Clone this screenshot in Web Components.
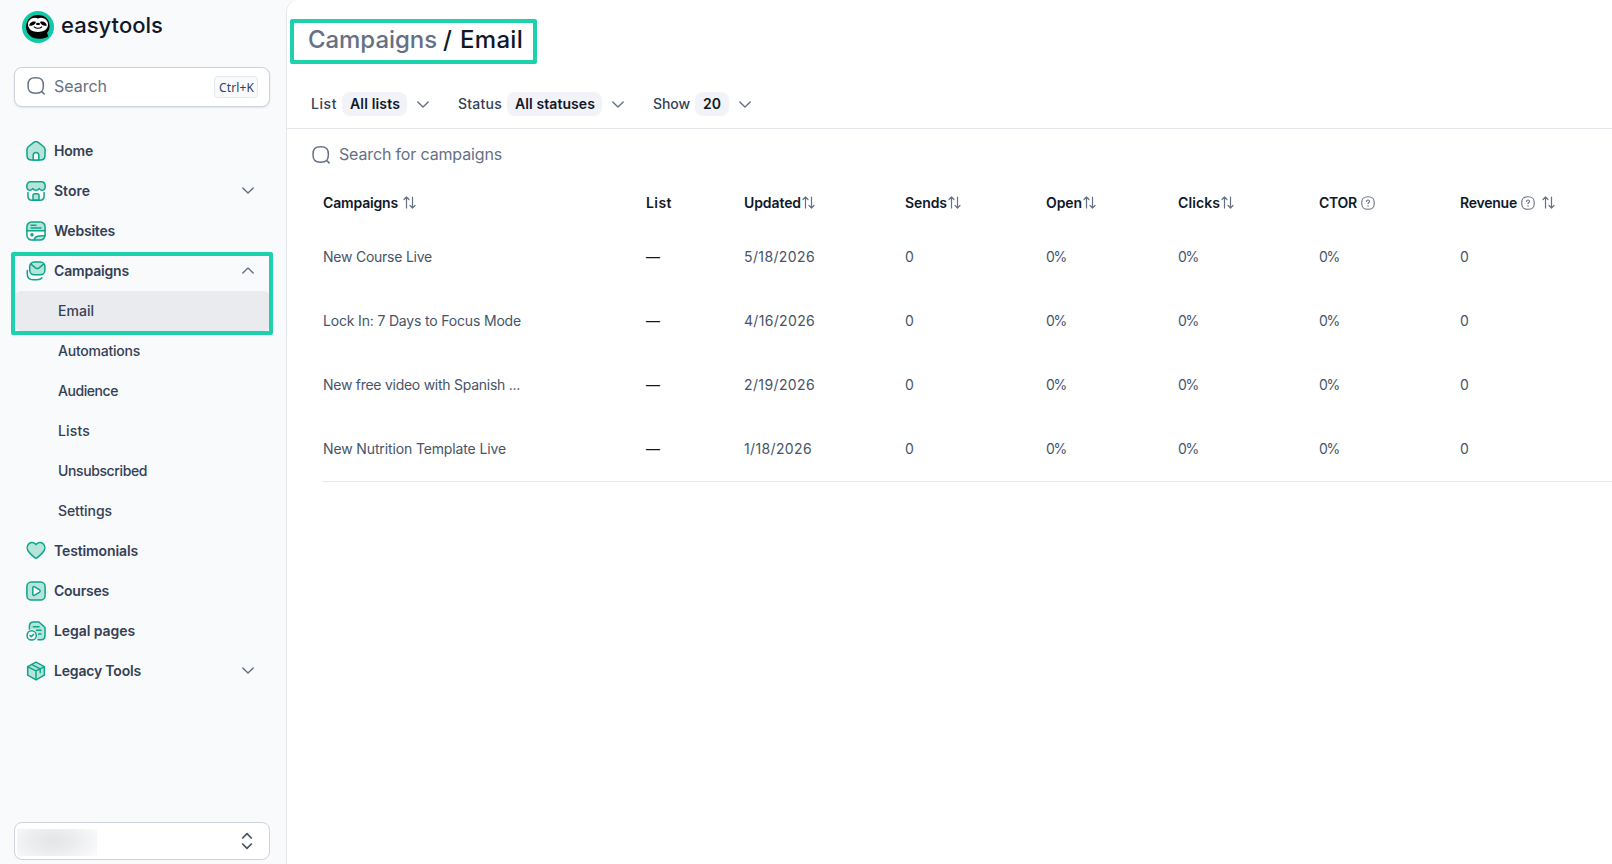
<!DOCTYPE html>
<html lang="en">
<head>
<meta charset="utf-8">
<title>Campaigns / Email</title>
<style>
  :root {
    --ink: #101828;
    --text: #344054;
    --muted: #667085;
    --line: #e4e7ec;
    --field-line: #cdd2dd;
    --side: #f9fafc;
    --accent: #1dd1ad;
    --green: #0ca48a;
    --mint: #b5e4da;
  }
  body {
    margin: 0;
    height: 864px;
    overflow: hidden;
    background: var(--side);
    color: var(--text);
    font: 400 14px/20px Inter, "Liberation Sans", sans-serif;
  }
</style>
</head>
<body>
<app-shell>
  <side-bar slot="side"></side-bar>
  <page-header></page-header>
  <filter-bar></filter-bar>
  <campaign-search></campaign-search>
  <campaign-table></campaign-table>
</app-shell>

<script>
const S = 'stroke="var(--green)" stroke-width="1.5" stroke-linecap="round" stroke-linejoin="round"';
const ICONS = {
  home: [20, 20, `<path ${S} fill="var(--mint)" d="M1 8.6C1 7.3 1.5 6.5 2.5 5.5L7.8 1.3C9.2.3 10.8.3 12.2 1.3L17.5 5.5C18.5 6.5 19 7.3 19 8.6V14.5C19 17.8 17.8 19 14.5 19H5.5C2.2 19 1 17.8 1 14.5Z"/><path ${S} fill="var(--side)" d="M7.2 19V14.2C7.2 12.5 8.2 11.4 10 11.4S12.8 12.5 12.8 14.2V19Z"/>`],
  store: [20, 20, `<path ${S} fill="none" d="M1.9 11.5V15C1.9 18 3 19.2 6 19.2H14C17 19.2 18.1 18 18.1 15V11.5"/><path ${S} fill="var(--mint)" d="M5 .8H15C17.8.8 19.2 2.3 19.2 5.3C19.2 8 18 9.2 16.4 9.2C15 9.2 14 8.6 13.2 7.6C12.5 8.8 11.4 9.2 10 9.2S7.5 8.8 6.8 7.6C6 8.6 5 9.2 3.6 9.2C2 9.2.8 8 .8 5.3C.8 2.3 2.2.8 5 .8Z"/><path ${S} fill="var(--mint)" d="M7 19V14.5C7 13.4 7.7 12.7 8.8 12.7H11.2C12.3 12.7 13 13.4 13 14.5V19Z"/>`],
  websites: [20, 20, `<path fill="var(--mint)" d="M1 10V6C1 2.5 2.5 1 6 1H14C17.5 1 19 2.5 19 6V10Z"/><path fill="var(--mint)" d="M8 19C8 16.5 11 14.2 19 14.5C18.5 18 17 19 14 19Z"/><rect ${S} fill="none" x=".9" y=".9" width="18.2" height="18.2" rx="5"/><path ${S} fill="none" d="M1 9.8H19M5 4.2H10M5 6.9H15M8.3 19C8.3 15.8 12 14.3 18.8 14.7"/><circle cx="6" cy="13.8" r="1.7" fill="var(--green)"/>`],
  mail: [20, 20, `<path ${S} fill="none" d="M1.3 9.5V13C1.3 16.9 3.2 18.7 7.2 18.7H11C13.6 18.7 15 18.2 16 16.8"/><rect ${S} fill="var(--mint)" x="3.7" y="1" width="15.2" height="12.7" rx="4.5"/><path ${S} fill="none" d="M5.2 3.3L9.5 6.8C10.8 7.8 11.8 7.8 13.1 6.8L17.4 3.3"/>`],
  heart: [20, 20, `<path ${S} fill="var(--mint)" d="M10 3.6C12 1.2 15 .9 17 2.6C19.3 4.7 19.3 8 17.5 10.5C15.8 13 13.3 15 11.3 16.6C10.4 17.3 9.6 17.3 8.7 16.6C6.7 15 4.2 13 2.5 10.5C.7 8 .7 4.7 3 2.6C5 .9 8 1.2 10 3.6Z"/>`],
  play: [20, 20, `<rect ${S} fill="var(--mint)" x=".9" y=".9" width="18.2" height="18.2" rx="4.6"/><path ${S} fill="var(--side)" d="M6.8 6.8C6.8 5.8 7.8 5.3 8.7 5.8L13.3 8.6C14.5 9.4 14.5 10.6 13.3 11.4L8.7 14.2C7.8 14.7 6.8 14.2 6.8 13.2Z"/>`],
  legal: [20, 20, `<path ${S} fill="var(--mint)" d="M3.4 8.2V5.3C3.4 2.3 4.7 1 7.6 1H13L19 6.5V14.5C19 17.6 17.8 18.8 15 18.8H12"/><path ${S} fill="none" d="M7.3 5.7H13M10.5 9.3H15M12.5 13H15"/><circle cx="5.7" cy="14.3" r="6.1" fill="var(--side)"/><circle ${S} cx="5.7" cy="14.4" r="4.6" fill="none"/><path ${S} fill="none" d="M4 14.5L5.3 15.8L7.6 13.2"/>`],
  box: [20, 20, `<path ${S} fill="var(--mint)" d="M10 1.2L18.3 5.6V14.2L10 18.8L1.7 14.2V5.6Z"/><path ${S} fill="none" d="M1.9 5.9L10 9.9L18.1 5.9M10 9.9V18.5M5.9 3.6L14.2 7.8V11.5"/>`],
  search: [20, 20, `<path fill="none" stroke="var(--muted)" stroke-width="1.5" stroke-linecap="round" d="M9.7 1.8C15.4 1.8 17.4 3.8 17.4 9.5S15.4 17.2 9.7 17.2S2 15.2 2 9.5S4 1.8 9.7 1.8ZM15.8 15.6L18.1 17.9"/>`],
  down: [12, 7, `<path fill="none" stroke="var(--muted)" stroke-width="1.4" stroke-linecap="round" stroke-linejoin="round" d="M.8.9L6 6L11.2.9"/>`],
  up: [12, 7, `<path fill="none" stroke="var(--muted)" stroke-width="1.4" stroke-linecap="round" stroke-linejoin="round" d="M.8 6.1L6 1L11.2 6.1"/>`],
  updown: [12, 18, `<path fill="none" stroke="#475467" stroke-width="1.7" stroke-linejoin="round" d="M1.2 6.5L6 1.7L10.8 6.5M1.2 11.5L6 16.3L10.8 11.5"/>`],
  sort: [13, 13, `<path fill="none" stroke="var(--muted)" stroke-width="1.2" stroke-linecap="round" stroke-linejoin="round" d="M3.5 12V1M1 3.5L3.5 1L6 3.5M9.5 1V12M7 9.5L9.5 12L12 9.5"/>`],
  help: [14, 14, `<path fill="none" stroke="var(--muted)" stroke-width="1.1" d="M7 .7C11.7.7 13.3 2.3 13.3 7S11.7 13.3 7 13.3S.7 11.7.7 7S2.3.7 7 .7Z"/><path fill="none" stroke="var(--muted)" stroke-width="1.1" stroke-linecap="round" d="M5.5 5.5C5.6 3.6 8.5 3.6 8.5 5.4C8.5 6.6 7 6.5 7 7.8"/><circle cx="7" cy="10" r=".7" fill="var(--muted)"/>`],
  sloth: [32, 32, `<circle cx="16" cy="16" r="16" fill="#0fc9a7"/><path fill="#000" d="M16 4C23.2 4 27.5 8.6 27.5 15C27.5 18.5 26.3 20.5 25 22L26.4 25.2C24 27.2 20.5 27.8 17 27.8C9.5 27.8 4.1 23 4.1 16C4.1 8.8 9 4 16 4Z"/><path fill="#fff" d="M16 7.4C21.5 5.5 26 9 26 13.6C26 18.8 21 21 16 21S6 18.8 6 13.6C6 9 10.5 5.5 16 7.4Z"/><path fill="#000" d="M7.3 14.8C7.3 11.4 11 9.7 13.8 10.8C14.2 12.8 11 15.1 7.3 14.8ZM24.7 14.8C24.7 11.4 21 9.7 18.2 10.8C17.8 12.8 21 15.1 24.7 14.8Z"/><ellipse cx="16" cy="12.9" rx="2" ry="1.2" fill="#000"/><path fill="none" stroke="#000" stroke-width="1.1" stroke-linecap="round" d="M12.2 15.8C14 17.8 18 17.8 19.8 15.8"/>`],
};

class UiIcon extends HTMLElement {
  constructor() {
    super();
    this.attachShadow({ mode: "open" });
  }

  connectedCallback() {
    const [w, h, body] = ICONS[this.getAttribute("name")];
    this.shadowRoot.innerHTML = `
      <style>
        :host { display: block; flex: none; width: ${w}px; height: ${h}px; }
        svg { display: block; }
      </style>
      <svg width="${w}" height="${h}" viewBox="0 0 ${w} ${h}">${body}</svg>
    `;
  }
}
customElements.define("ui-icon", UiIcon);

// Single line label, letter-spaced so that it takes up "fit" pixels.
class UiLabel extends HTMLElement {
  constructor() {
    super();
    this.attachShadow({ mode: "open" });
    this.shadowRoot.innerHTML = `
      <style>
        :host { display: flex; flex: none; white-space: nowrap; }
        span { flex: none; }
      </style>
      <span><slot></slot></span>
    `;
  }

  connectedCallback() {
    const fit = Number(this.getAttribute("fit"));
    if (!fit) return;
    const span = this.shadowRoot.querySelector("span");
    const width = span.getBoundingClientRect().width;
    span.style.letterSpacing = `${(fit - width) / this.textContent.length}px`;
    this.style.width = `${fit}px`;
  }
}
customElements.define("ui-label", UiLabel);

class AppShell extends HTMLElement {
  constructor() {
    super();
    this.attachShadow({ mode: "open" });
    this.shadowRoot.innerHTML = `
      <style>
        :host { display: grid; grid-template-columns: 286px 1fr; height: 864px; }
        main {
          background: #fff;
          border-left: 1px solid var(--line);
          border-top-left-radius: 12px;
          min-width: 0;
        }
      </style>
      <slot name="side"></slot>
      <main><slot></slot></main>
    `;
  }
}
customElements.define("app-shell", AppShell);

class NavItem extends HTMLElement {
  constructor() {
    super();
    this.attachShadow({ mode: "open" });
  }

  connectedCallback() {
    const icon = this.getAttribute("icon");
    const arrow = this.getAttribute("arrow");
    this.shadowRoot.innerHTML = `
      <style>
        :host {
          display: flex;
          align-items: center;
          gap: 8px;
          height: 40px;
          box-sizing: border-box;
          padding: 0 16px 0 11px;
          border-radius: 6px;
          color: var(--text);
          font-weight: 600;
        }
        :host([sub]) { padding-left: 43px; font-weight: 500; }
        :host([active]) { background: #eaebef; }
        .arrow { margin-left: auto; margin-top: -1px; }
      </style>
      ${icon ? `<ui-icon name="${icon}"></ui-icon>` : ""}
      <ui-label fit="${this.getAttribute("fit")}">${this.getAttribute("label")}</ui-label>
      ${arrow ? `<ui-icon class="arrow" name="${arrow}"></ui-icon>` : ""}
    `;
  }
}
customElements.define("nav-item", NavItem);

class SideBar extends HTMLElement {
  constructor() {
    super();
    this.attachShadow({ mode: "open" });
    this.shadowRoot.innerHTML = `
      <style>
        :host {
          display: flex;
          flex-direction: column;
          box-sizing: border-box;
          height: 864px;
          padding: 11px 16px 4px 14px;
        }
        .brand {
          display: flex;
          align-items: center;
          gap: 7px;
          height: 32px;
          padding-left: 8px;
          color: var(--ink);
          font-size: 22px;
          font-weight: 500;
        }
        .brand ui-label { margin-top: -5px; }
        .field {
          display: flex;
          align-items: center;
          box-sizing: border-box;
          border: 1px solid var(--field-line);
          border-radius: 8px;
          background: #fff;
        }
        .search {
          height: 40px;
          margin-top: 24px;
          padding: 0 11px 0 11px;
          gap: 8px;
          color: var(--muted);
          font-size: 16px;
          box-shadow: 0 1px 2px #1018281a;
        }
        .search > ui-icon, .search > ui-label { margin-top: -2px; }
        kbd {
          margin-left: auto;
          box-sizing: border-box;
          width: 44px;
          height: 22px;
          padding-left: 4px;
          border: 1px solid var(--line);
          border-radius: 4px;
          background: var(--side);
          color: var(--text);
          font: 400 12px/21px "Noto Sans", sans-serif;
        }
        nav { margin: 24px 0 0 1px; position: relative; }
        .mark {
          position: absolute;
          left: -4px;
          top: 121px;
          width: 254px;
          height: 75px;
          border: 4px solid var(--accent);
          border-radius: 2px;
        }
        .account { height: 38px; margin-top: auto; padding: 0 16px 0 2px; justify-content: space-between; }
        .account ui-icon { margin-top: -1px; }
        .name {
          width: 80px;
          height: 27px;
          margin-top: 3px;
          background: radial-gradient(ellipse 52px 26px at 45% 45%, #e4e5e7, #ebecee 40%, #fbfbfc 100%);
        }
      </style>
      <div class="brand"><ui-icon name="sloth"></ui-icon><ui-label fit="102">easytools</ui-label></div>
      <div class="field search">
        <ui-icon name="search"></ui-icon>
        <ui-label fit="53">Search</ui-label>
        <kbd><ui-label fit="35">Ctrl+K</ui-label></kbd>
      </div>
      <nav>
        <nav-item icon="home" label="Home" fit="39"></nav-item>
        <nav-item icon="store" label="Store" fit="36" arrow="down"></nav-item>
        <nav-item icon="websites" label="Websites" fit="61"></nav-item>
        <nav-item icon="mail" label="Campaigns" fit="75" arrow="up"></nav-item>
        <nav-item sub active label="Email" fit="36"></nav-item>
        <nav-item sub label="Automations" fit="82"></nav-item>
        <nav-item sub label="Audience" fit="60"></nav-item>
        <nav-item sub label="Lists" fit="32"></nav-item>
        <nav-item sub label="Unsubscribed" fit="89"></nav-item>
        <nav-item sub label="Settings" fit="54"></nav-item>
        <nav-item icon="heart" label="Testimonials" fit="84"></nav-item>
        <nav-item icon="play" label="Courses" fit="55"></nav-item>
        <nav-item icon="legal" label="Legal pages" fit="81"></nav-item>
        <nav-item icon="box" label="Legacy Tools" fit="87" arrow="down"></nav-item>
        <div class="mark"></div>
      </nav>
      <div class="field account"><div class="name"></div><ui-icon name="updown"></ui-icon></div>
    `;
  }
}
customElements.define("side-bar", SideBar);

class PageHeader extends HTMLElement {
  constructor() {
    super();
    this.attachShadow({ mode: "open" });
    this.shadowRoot.innerHTML = `
      <style>
        :host { display: block; padding: 19px 0 0 3px; }
        h1 {
          display: flex;
          box-sizing: border-box;
          width: 247px;
          height: 45px;
          margin: 0;
          padding-left: 14px;
          border: 4px solid var(--accent);
          border-radius: 2px;
          color: var(--ink);
          font-size: 24px;
          font-weight: 500;
          line-height: 34px;
        }
        .parent { color: var(--muted); margin-right: 6px; }
        .slash { margin-right: 8px; }
      </style>
      <h1>
        <ui-label class="parent" fit="129">Campaigns</ui-label>
        <ui-label class="slash" fit="9">/</ui-label>
        <ui-label fit="63">Email</ui-label>
      </h1>
    `;
  }
}
customElements.define("page-header", PageHeader);

class FilterBar extends HTMLElement {
  constructor() {
    super();
    this.attachShadow({ mode: "open" });
    const filters = [
      { label: "List", fit: 26, value: "All lists", valueFit: 50, width: 65 },
      { label: "Status", fit: 44, value: "All statuses", valueFit: 80, width: 95 },
      { label: "Show", fit: 37, value: "20", valueFit: 18, width: 34 },
    ];
    this.shadowRoot.innerHTML = `
      <style>
        :host {
          display: flex;
          gap: 28px;
          padding: 28px 0 12px 24px;
          border-bottom: 1px solid var(--line);
        }
        .filter { display: flex; align-items: center; font-weight: 500; }
        .value {
          display: flex;
          box-sizing: border-box;
          padding-left: 8px;
          margin: 0 10px 0 5px;
          border-radius: 8px;
          background: #f2f3f8;
          color: var(--ink);
          font-weight: 600;
          line-height: 24px;
        }
        .filter + .filter { margin-left: 1px; }
      </style>
      ${filters
        .map(
          (f) => `
          <div class="filter">
            <ui-label fit="${f.fit}">${f.label}</ui-label>
            <div class="value" style="width: ${f.width}px"><ui-label fit="${f.valueFit}">${f.value}</ui-label></div>
            <ui-icon name="down"></ui-icon>
          </div>`
        )
        .join("")}
    `;
  }
}
customElements.define("filter-bar", FilterBar);

class CampaignSearch extends HTMLElement {
  constructor() {
    super();
    this.attachShadow({ mode: "open" });
    this.shadowRoot.innerHTML = `
      <style>
        :host {
          display: flex;
          align-items: center;
          gap: 8px;
          height: 49px;
          padding: 0 0 2px 24px;
          color: var(--muted);
          font-size: 16px;
        }
        ui-icon { margin-top: 2px; }
      </style>
      <ui-icon name="search"></ui-icon>
      <ui-label fit="163">Search for campaigns</ui-label>
    `;
  }
}
customElements.define("campaign-search", CampaignSearch);

class CampaignTable extends HTMLElement {
  constructor() {
    super();
    this.attachShadow({ mode: "open" });
    const columns = [
      { label: "Campaigns", fit: 75, icons: ["sort"], gap: 5 },
      { label: "List", fit: 26, icons: [], gap: 0 },
      { label: "Updated", fit: 57, icons: ["sort"], gap: 1 },
      { label: "Sends", fit: 42, icons: ["sort"], gap: 1 },
      { label: "Open", fit: 36, icons: ["sort"], gap: 1 },
      { label: "Clicks", fit: 42, icons: ["sort"], gap: 1 },
      { label: "CTOR", fit: 38, icons: ["help"], gap: 4 },
      { label: "Revenue", fit: 57, icons: ["help", "sort"], gap: 4 },
    ];
    const rows = [
      { name: "New Course Live", fit: 109, date: "5/18/2026", dateFit: 71 },
      { name: "Lock In: 7 Days to Focus Mode", fit: 198, date: "4/16/2026", dateFit: 71 },
      { name: "New free video with Spanish ...", fit: 197, date: "2/19/2026", dateFit: 71 },
      { name: "New Nutrition Template Live", fit: 183, date: "1/18/2026", dateFit: 68 },
    ];
    this.shadowRoot.innerHTML = `
      <style>
        :host { display: block; margin-left: 36px; border-bottom: 1px solid var(--line); color: #475467; }
        .row {
          display: grid;
          grid-template-columns: 323px 98px 161px 141px 132px 141px 141px 1fr;
          align-items: center;
          height: 64px;
        }
        .head { height: 45px; color: var(--ink); font-weight: 600; }
        .cell { display: flex; align-items: center; }
        .cell ui-icon + ui-icon { margin-left: 3px; }
        .dash { color: var(--ink); }
      </style>
      <div class="row head">
        ${columns
          .map(
            (c) => `<div class="cell" style="gap: ${c.gap}px"><ui-label fit="${c.fit}">${c.label}</ui-label>${c.icons
              .map((i) => `<ui-icon name="${i}"></ui-icon>`)
              .join("")}</div>`
          )
          .join("")}
      </div>
      ${rows
        .map(
          (r) => `
          <div class="row">
            <ui-label fit="${r.fit}">${r.name}</ui-label>
            <ui-label class="dash" fit="13">—</ui-label>
            <ui-label fit="${r.dateFit}">${r.date}</ui-label>
            <ui-label fit="10">0</ui-label>
            <ui-label fit="20">0%</ui-label>
            <ui-label fit="20">0%</ui-label>
            <ui-label fit="20">0%</ui-label>
            <ui-label fit="10">0</ui-label>
          </div>`
        )
        .join("")}
    `;
  }
}
customElements.define("campaign-table", CampaignTable);
</script>
</body>
</html>
